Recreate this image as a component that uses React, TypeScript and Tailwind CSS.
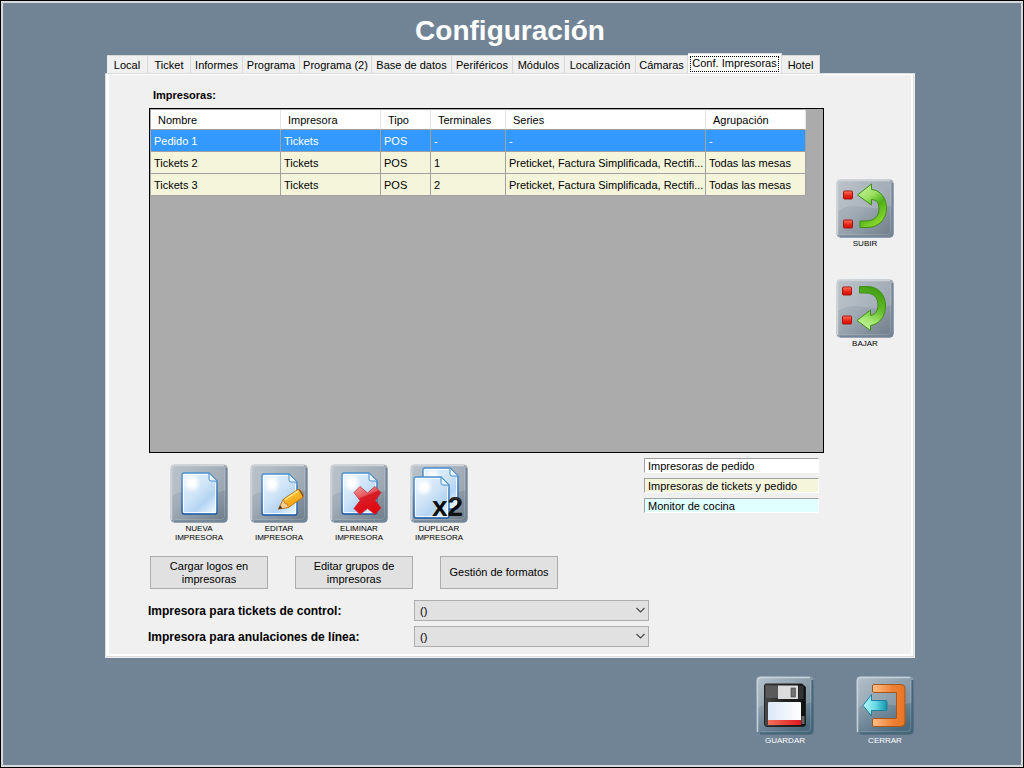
import { ReactNode, useState } from "react";
import clsx from "clsx";

const tabs = [
  { label: "Local", width: "w-[41px]" },
  { label: "Ticket", width: "w-[43px]" },
  { label: "Informes", width: "w-[52px]" },
  { label: "Programa", width: "w-[57px]" },
  { label: "Programa (2)", width: "w-[72px]" },
  { label: "Base de datos", width: "w-[80px]" },
  { label: "Periféricos", width: "w-[61px]" },
  { label: "Módulos", width: "w-[52px]" },
  { label: "Localización", width: "w-[71px]" },
  { label: "Cámaras", width: "w-[52px]" },
  { label: "Conf. Impresoras", width: "w-[94px]" },
  { label: "Hotel", width: "w-[38px]" },
];

const columns = [
  { label: "Nombre", width: "w-[130px]" },
  { label: "Impresora", width: "w-[100px]" },
  { label: "Tipo", width: "w-[50px]" },
  { label: "Terminales", width: "w-[75px]" },
  { label: "Series", width: "w-[200px]" },
  { label: "Agrupación", width: "w-[100px]" },
];

const printers = [
  ["Pedido 1", "Tickets", "POS", "-", "-", "-"],
  ["Tickets 2", "Tickets", "POS", "1", "Preticket, Factura Simplificada, Rectifi...", "Todas las mesas"],
  ["Tickets 3", "Tickets", "POS", "2", "Preticket, Factura Simplificada, Rectifi...", "Todas las mesas"],
];

const legend = [
  { label: "Impresoras de pedido", color: "bg-white" },
  { label: "Impresoras de tickets y pedido", color: "bg-[#f5f5dc]" },
  { label: "Monitor de cocina", color: "bg-[#e0ffff]" },
];

// Gradients shared by every icon
function IconDefs() {
  return (
    <svg className="absolute h-0 w-0" aria-hidden="true">
      <defs>
        <linearGradient id="tile" x1="0" y1="0" x2="0.8" y2="1">
          <stop offset="0" stopColor="#bcc3ca" />
          <stop offset="0.5" stopColor="#a0abb5" />
          <stop offset="1" stopColor="#74828f" />
        </linearGradient>
        <linearGradient id="tileDark" x1="0" y1="0" x2="0.6" y2="1">
          <stop offset="0" stopColor="#b4c1ca" />
          <stop offset="0.5" stopColor="#8397a6" />
          <stop offset="1" stopColor="#4c6a7e" />
        </linearGradient>
        <linearGradient id="gloss" x1="0" y1="0" x2="0" y2="1">
          <stop offset="0" stopColor="#fff" stopOpacity="0.02" />
          <stop offset="1" stopColor="#fff" stopOpacity="0.16" />
        </linearGradient>
        <linearGradient id="sheet" x1="0" y1="0" x2="0.8" y2="1">
          <stop offset="0" stopColor="#eaf5ff" />
          <stop offset="0.5" stopColor="#cfe4f7" />
          <stop offset="0.75" stopColor="#b3d4f2" />
          <stop offset="1" stopColor="#e4f3ff" />
        </linearGradient>
        <radialGradient id="shine">
          <stop offset="0.3" stopColor="#fff" />
          <stop offset="1" stopColor="#fff" stopOpacity="0" />
        </radialGradient>
        <linearGradient id="sheetEdge" x1="0" y1="0" x2="0" y2="1">
          <stop offset="0" stopColor="#4d92d0" />
          <stop offset="1" stopColor="#1a5aa8" />
        </linearGradient>
        <linearGradient id="pencil" x1="0" y1="0" x2="0.5" y2="1">
          <stop offset="0" stopColor="#ffd54a" />
          <stop offset="1" stopColor="#f39a08" />
        </linearGradient>
        <linearGradient id="cross" x1="0" y1="0" x2="0.4" y2="1">
          <stop offset="0" stopColor="#f6a0a0" />
          <stop offset="0.4" stopColor="#e65a5e" />
          <stop offset="0.46" stopColor="#d81e28" />
          <stop offset="1" stopColor="#e00810" />
        </linearGradient>
        <linearGradient id="led" x1="0" y1="0" x2="0" y2="1">
          <stop offset="0" stopColor="#ff7a66" />
          <stop offset="0.5" stopColor="#f02a1c" />
          <stop offset="1" stopColor="#c80e08" />
        </linearGradient>
        <linearGradient id="greenUp" x1="0" y1="0" x2="0.5" y2="1">
          <stop offset="0" stopColor="#d2f7b0" />
          <stop offset="0.4" stopColor="#9be060" />
          <stop offset="0.65" stopColor="#4fae18" />
          <stop offset="1" stopColor="#86d62c" />
        </linearGradient>
        <linearGradient id="greenDown" x1="0.6" y1="0" x2="0.3" y2="1">
          <stop offset="0" stopColor="#3f9a10" />
          <stop offset="0.45" stopColor="#62bd28" />
          <stop offset="0.75" stopColor="#a5e672" />
          <stop offset="1" stopColor="#caf5a4" />
        </linearGradient>
        <linearGradient id="disk" x1="0" y1="0" x2="1" y2="0">
          <stop offset="0" stopColor="#4a4a4a" />
          <stop offset="0.5" stopColor="#222" />
          <stop offset="1" stopColor="#111" />
        </linearGradient>
        <linearGradient id="paper" x1="0" y1="0" x2="1" y2="0">
          <stop offset="0" stopColor="#dce8f8" />
          <stop offset="1" stopColor="#ffffff" />
        </linearGradient>
        <linearGradient id="redBand" x1="0" y1="0" x2="1" y2="0">
          <stop offset="0" stopColor="#f07058" />
          <stop offset="1" stopColor="#e01820" />
        </linearGradient>
        <linearGradient id="door" x1="0" y1="0" x2="1" y2="0">
          <stop offset="0" stopColor="#ffc08a" />
          <stop offset="0.6" stopColor="#ee8238" />
          <stop offset="1" stopColor="#e87422" />
        </linearGradient>
        <linearGradient id="cyan" x1="0" y1="0" x2="1" y2="0">
          <stop offset="0" stopColor="#b6f8fc" />
          <stop offset="0.5" stopColor="#6adbe6" />
          <stop offset="1" stopColor="#1296ac" />
        </linearGradient>
        <linearGradient id="ink" x1="0" y1="0" x2="0" y2="1">
          <stop offset="0" stopColor="#4a4a4a" />
          <stop offset="0.5" stopColor="#000" />
          <stop offset="1" stopColor="#222" />
        </linearGradient>
      </defs>
    </svg>
  );
}

function Tile({ dark, children }: { dark?: boolean; children: ReactNode }) {
  return (
    <svg width="58" height="59" viewBox="0 0 58 59" aria-hidden="true">
      <rect x="0.5" y="0.5" width="57" height="58" rx="4" fill={dark ? "url(#tileDark)" : "url(#tile)"} />
      <path d="M2 4Q2 2 4 2H54Q56 2 56 4V26Q44 31 28 28T2 32Z" fill="url(#gloss)" />
      <path d="M1.5 56V5Q1.5 1.5 5 1.5H54" fill="none" stroke={dark ? "#c6d2da" : "#ccd2d8"} strokeWidth="1.5" />
      <path d="M56.5 4V54Q56.5 57.5 53 57.5H4" fill="none" stroke={dark ? "#48667a" : "#74879a"} strokeWidth="2" />
      <path d="M54.5 5V52Q54.5 55.5 51 55.5H5" fill="none" stroke="#fff" strokeOpacity="0.15" />
      {children}
    </svg>
  );
}

// A sheet of paper with a folded corner, 35 x 41, drawn from its own origin
function Sheet({ x, y }: { x: number; y: number }) {
  return (
    <g transform={`translate(${x} ${y})`}>
      <path d="M2 0H27L35 8V39Q35 41 33 41H2Q0 41 0 39V2Q0 0 2 0Z" fill="url(#sheet)" stroke="url(#sheetEdge)" strokeWidth="1.4" />
      <path d="M2.5 1.5H26M1.5 3V38.5Q1.5 39.5 2.5 39.5H33.5V10" fill="none" stroke="#fff" strokeOpacity="0.8" />
      <ellipse cx="10" cy="10" rx="9" ry="10" fill="url(#shine)" />
      <path d="M27 0L35 8H29Q27 8 27 6Z" fill="#e6f3ff" stroke="#4d92d0" />
    </g>
  );
}

function NewIcon() {
  return (
    <Tile>
      <Sheet x={12} y={9} />
    </Tile>
  );
}

function EditIcon() {
  return (
    <Tile>
      <Sheet x={12} y={10} />
      <path d="M28.5 45L33.5 35L47 26Q49 24.5 50.5 26.5L53 30.5Q54 32.5 52 34L38.5 43.5Z" fill="url(#pencil)" stroke="#b06a10" strokeWidth="0.8" />
      <path d="M34.5 36L48 27" stroke="#ffe58a" strokeWidth="1.5" />
      <path d="M28.5 45L33.5 35L34.5 39L37 40L38.5 43.5Z" fill="#f3cf96" stroke="#a86410" strokeWidth="0.6" />
      <path d="M28.5 45L30 41.5L32.5 44.2Z" fill="#4a2c10" />
      <path d="M48.5 25.5Q49.8 25.2 50.5 26.5L53 30.5Q53.8 31.8 52.8 33Z" fill="#8a4a20" />
    </Tile>
  );
}

function DeleteIcon() {
  return (
    <Tile>
      <Sheet x={12} y={9} />
      <path
        d="M30 22.5L37.5 29L45 22.5L51 28.5L45.5 36.5L51 44L45 50.5L37.5 44.5L30 50.5L24 44.5L30 36.5L24 28.5Z"
        fill="url(#cross)"
        stroke="#c4303a"
        strokeWidth="0.8"
        strokeLinejoin="round"
      />
    </Tile>
  );
}

function DuplicateIcon() {
  return (
    <Tile>
      <Sheet x={13} y={4} />
      <Sheet x={4} y={13} />
      <text x="22" y="52" fontFamily="Liberation Sans, Arial, sans-serif" fontWeight="bold" fontSize="28" fill="url(#ink)">
        x2
      </text>
    </Tile>
  );
}

function UpIcon() {
  return (
    <Tile>
      <rect x="7.5" y="12" width="9" height="8" rx="1" fill="url(#led)" stroke="#a81410" />
      <rect x="7.5" y="41" width="9" height="8" rx="1" fill="url(#led)" stroke="#a81410" />
      <path
        d="M21.5 16L35.5 5V10.5C45 11 50.5 20 50.5 29C50.5 41 42 48.5 31 48.5H24V42H30C38 42 43 37.5 43 30C43 24 41 21 35.5 20.5V26Z"
        fill="url(#greenUp)"
        stroke="#3f8e18"
        strokeLinejoin="round"
      />
    </Tile>
  );
}

function DownIcon() {
  return (
    <Tile>
      <rect x="6.5" y="8" width="9" height="8" rx="1" fill="url(#led)" stroke="#a81410" />
      <rect x="6.5" y="37" width="9" height="8" rx="1" fill="url(#led)" stroke="#a81410" />
      <path
        d="M21 41.5L34.5 31V36.5C39.5 35.5 42 32 42 26C42 18 37 14 30 14H23.5V7.5H31C42 7.5 49.5 15 49.5 27C49.5 37 44 45 34.5 46.5V51.5Z"
        fill="url(#greenDown)"
        stroke="#3f8e18"
        strokeLinejoin="round"
      />
    </Tile>
  );
}

function SaveIcon() {
  return (
    <Tile dark>
      <path d="M10 8H46L49.5 11V48Q49.5 50.5 47 50.5H11Q8.5 50.5 8.5 48V10Q8.5 8 10 8Z" fill="url(#disk)" stroke="#222" />
      <path d="M10 9.5H22V22H10Z" fill="#5a5a5a" />
      <rect x="22" y="9.5" width="20" height="13.5" fill="#dcdcdc" />
      <rect x="35" y="12" width="4.5" height="9" fill="#707070" stroke="#444" strokeWidth="0.6" />
      <rect x="42.5" y="10" width="5" height="13" fill="#333" />
      <path d="M12 27Q12 26 13 26H44Q45 26 45 27V44H12Z" fill="url(#paper)" />
      <rect x="12" y="44" width="33" height="5" fill="url(#redBand)" />
      <path d="M45.5 40H48.5V48H45.5Z" fill="#666" />
    </Tile>
  );
}

function CloseIcon() {
  return (
    <Tile dark>
      <path
        d="M18 8.5H45Q49 8.5 49 12V47Q49 50.5 45 50.5H18Q16.5 50.5 16.5 49V44Q16.5 42.5 18 42.5H40.5V16.5H18Q16.5 16.5 16.5 15V10Q16.5 8.5 18 8.5Z"
        fill="url(#door)"
        stroke="#a4571a"
      />
      <path d="M7 29.5L15.5 18.5V24.5H30Q31 24.5 31 25.5V33.5Q31 34.5 30 34.5H15.5V40Z" fill="url(#cyan)" stroke="#1f7f9c" strokeLinejoin="round" />
    </Tile>
  );
}

function IconButton({ icon, label, light }: { icon: ReactNode; label: string; light?: boolean }) {
  return (
    <button type="button" className="flex w-[58px] flex-col items-center gap-px">
      {icon}
      <span className={clsx("block text-[8px] leading-[9px]", light ? "text-white" : "text-black")}>{label}</span>
    </button>
  );
}

function TextButton({ label }: { label: string }) {
  return (
    <button
      type="button"
      className="h-[33px] w-[118px] border border-[#adadad] bg-[#e1e1e1] px-2 text-center leading-[13px] text-black"
    >
      {label}
    </button>
  );
}

function PrinterSelect({ id, label }: { id: string; label: string }) {
  return (
    <div className="flex items-center">
      <label htmlFor={id} className="w-[266px] pt-[2px] text-xs leading-[13px] font-bold">
        {label}
      </label>
      <div className="relative">
        <select id={id} className="block h-[21px] w-[235px] appearance-none border border-[#adadad] bg-[#e1e1e1] px-[5px] pt-px">
          <option>()</option>
        </select>
        <svg className="pointer-events-none absolute top-[7px] right-1" width="9" height="7" viewBox="0 0 9 7" aria-hidden="true">
          <path d="M0.5 1L4.5 5L8.5 1" fill="none" stroke="#444" strokeWidth="1.1" />
        </svg>
      </div>
    </div>
  );
}

export default function App() {
  const [activeTab, setActiveTab] = useState("Conf. Impresoras");
  const [selected, setSelected] = useState(0);

  return (
    <div className="min-h-screen border border-black bg-[#718496] font-['Liberation_Sans',Arial,sans-serif] text-[11px] leading-[13px] text-black">
      <IconDefs />
      <div className="min-h-[766px] border-2 border-[#dcdad8] pr-[106px] pl-[102px]">
        <h1 className="pt-3 text-center text-[28px] leading-8 font-bold text-white">Configuración</h1>

        <div role="tablist" className="mt-[7px] flex h-[19px] items-end pl-[2px]">
          {tabs.map((tab) => {
            const active = tab.label === activeTab;
            return (
              <button
                key={tab.label}
                type="button"
                role="tab"
                aria-selected={active}
                onClick={() => setActiveTab(tab.label)}
                className={clsx(
                  "shrink-0 border-t border-r border-[#d9d9d9] text-center whitespace-nowrap",
                  tab.width,
                  active ? "h-5 bg-white p-[2px]" : "h-[18px] bg-[#f0f0f0] pt-[2px]"
                )}
              >
                {active ? <span className="block border border-dotted border-black pb-px">{tab.label}</span> : tab.label}
              </button>
            );
          })}
        </div>

        <div className="border border-[#dcdcdc] border-r-[#f0f0f0] border-b-[#f0f0f0]">
          <div className="border-r border-b border-[#dcdcdc]">
            <main className="flex gap-3 border-t border-r-2 border-b-2 border-l-[3px] border-white bg-[#f0f0f0] pt-[14px] pr-[17px] pb-[7px] pl-10">
              <section className="min-w-0 flex-1">
                <h2 className="pl-1 font-bold">Impresoras:</h2>

                <div className="mt-[6px] h-[345px] border border-black bg-[#ababab] p-px">
                  <table className="w-[655px] table-fixed border-separate border-spacing-0">
                    <thead>
                      <tr className="h-5">
                        {columns.map((column) => (
                          <th
                            key={column.label}
                            className={clsx(
                              "border-r border-b border-r-[#e5e5e5] border-b-[#a0a0a0] bg-white p-0 pt-[2px] pl-[7px] text-left font-normal",
                              column.width
                            )}
                          >
                            {column.label}
                          </th>
                        ))}
                      </tr>
                    </thead>
                    <tbody>
                      {printers.map((printer, row) => (
                        <tr
                          key={printer[0]}
                          onClick={() => setSelected(row)}
                          className={clsx("h-[22px]", row === selected ? "bg-[#3399ff] text-white" : "bg-[#f5f5dc]")}
                        >
                          {printer.map((value, index) => (
                            <td key={index} className="overflow-hidden border-r border-b border-[#a0a0a0] p-0 pt-[2px] pl-[3px] whitespace-nowrap">
                              {value}
                            </td>
                          ))}
                        </tr>
                      ))}
                    </tbody>
                  </table>
                </div>

                <div className="flex items-start justify-between pr-[5px] pl-[21px]">
                  <div className="flex gap-[22px] pt-[11px]">
                    <IconButton icon={<NewIcon />} label="NUEVA IMPRESORA" />
                    <IconButton icon={<EditIcon />} label="EDITAR IMPRESORA" />
                    <IconButton icon={<DeleteIcon />} label="ELIMINAR IMPRESORA" />
                    <IconButton icon={<DuplicateIcon />} label="DUPLICAR IMPRESORA" />
                  </div>
                  <ul className="flex w-[175px] flex-col gap-[5px] pt-[5px]">
                    {legend.map((item) => (
                      <li
                        key={item.label}
                        className={clsx(
                          "border border-t-[#a0a0a0] border-r-white border-b-white border-l-[#a0a0a0] pt-[2px] pl-[3px] leading-[11px]",
                          item.color
                        )}
                      >
                        {item.label}
                      </li>
                    ))}
                  </ul>
                </div>

                <div className="mt-[14px] flex gap-[27px] pl-px">
                  <TextButton label="Cargar logos en impresoras" />
                  <TextButton label="Editar grupos de impresoras" />
                  <TextButton label="Gestión de formatos" />
                </div>

                <div className="mt-[11px] -ml-px flex flex-col gap-[5px]">
                  <PrinterSelect id="control" label="Impresora para tickets de control:" />
                  <PrinterSelect id="anulaciones" label="Impresora para anulaciones de línea:" />
                </div>
              </section>

              <aside className="flex flex-col gap-[31px] pt-[90px]">
                <IconButton icon={<UpIcon />} label="SUBIR" />
                <IconButton icon={<DownIcon />} label="BAJAR" />
              </aside>
            </main>
          </div>
        </div>

        <div className="mt-[18px] flex justify-end gap-[42px] pr-px">
          <IconButton icon={<SaveIcon />} label="GUARDAR" light />
          <IconButton icon={<CloseIcon />} label="CERRAR" light />
        </div>
      </div>
    </div>
  );
}
